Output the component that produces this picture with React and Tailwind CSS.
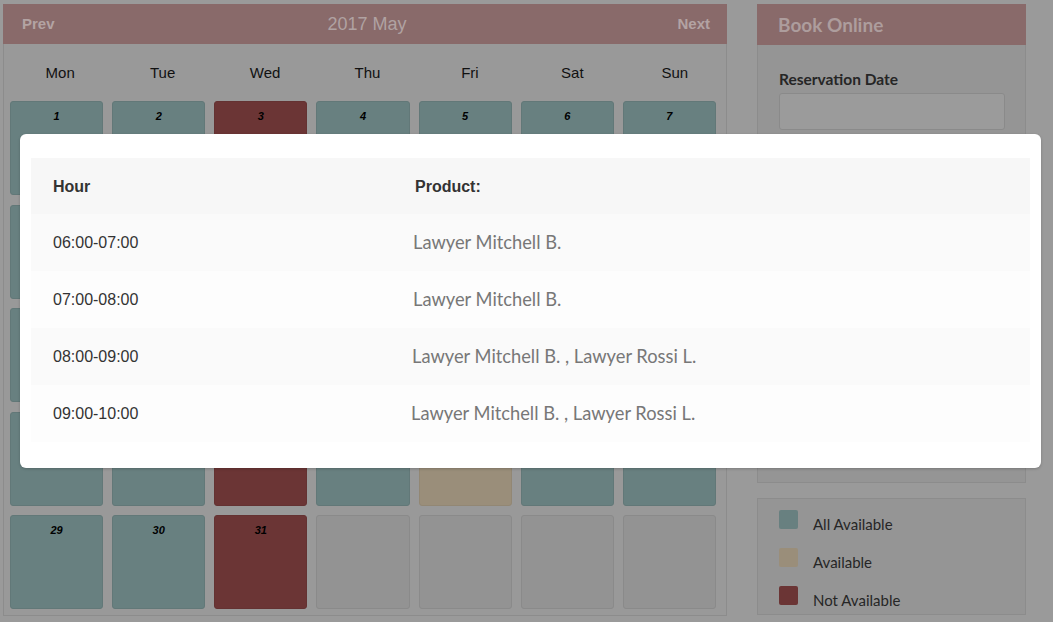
import React from "react";

const T = "teal", R = "red", Y = "tan", E = "empty";
const days = ["Mon", "Tue", "Wed", "Thu", "Fri", "Sat", "Sun"];

const cells = [];
for (let d = 1; d <= 31; d++) {
  const dow = (d - 1) % 7;
  let s = T;
  if (dow === 2) s = R;
  if (d === 26) s = Y;
  cells.push({ d, s });
}
for (let i = 0; i < 4; i++) cells.push({ d: null, s: E });

const cellCls = {
  teal: "bg-[#688080] border-[#627878]",
  red: "bg-[#6b3535] border-[#643232]",
  tan: "bg-[#9a8e7a] border-[#928774]",
  empty: "bg-[#939393] border-[#8a8a8a]",
};

const rows = [
  ["06:00-07:00", "Lawyer Mitchell B.", "bg-[#fafafa]", "pl-[382px]"],
  ["07:00-08:00", "Lawyer Mitchell B.", "bg-[#fdfdfd]", "pl-[382px]"],
  ["08:00-09:00", "Lawyer Mitchell B. , Lawyer Rossi L.", "bg-[#fafafa]", "pl-[381px]"],
  ["09:00-10:00", "Lawyer Mitchell B. , Lawyer Rossi L.", "bg-[#fdfdfd]", "pl-[380px]"],
];

export default function App() {
  return (
    <div className="relative w-[1053px] h-[622px] overflow-hidden bg-[#9a9a9a]" style={{ fontFamily: '"Liberation Sans", Arial, sans-serif' }}>
      <div className="flex pl-[3px] pt-[4px] gap-[30px]">
        {/* Calendar */}
        <div className="w-[724px] flex flex-col">
          <div className="h-[40px] bg-[#896a6a] flex items-center justify-between px-[19px]">
            <span className="text-[15px] font-bold text-[#b3a3a3]">Prev</span>
            <span className="text-[18px] text-[#b0a2a2] ml-[2px]">2017 May</span>
            <span className="text-[15px] font-bold text-[#b3a3a3] mr-[-2px]">Next</span>
          </div>
          <div className="border-x border-b border-[#8c8c8c] h-[572px] bg-[#999999]">
            <div className="grid grid-cols-7 pl-[5px] h-[57px] items-center pt-[2px]">
              {days.map((d) => (
                <div key={d} className="text-center text-[15px] text-[#111]">{d}</div>
              ))}
            </div>
            <div className="grid grid-cols-7 gap-x-[9px] gap-y-[9.5px] pl-[6px] pr-[10px]">
              {cells.map((c, i) => (
                <div key={i} className={`h-[94px] rounded-[3px] border ${cellCls[c.s]} flex justify-center`}>
                  {c.d && <span className="mt-[6px] text-[11px] font-bold italic text-black">{c.d}</span>}
                </div>
              ))}
            </div>
          </div>
        </div>
        {/* Right panel */}
        <div className="w-[269px] flex flex-col" style={{ fontFamily: 'Lato, "Open Sans", sans-serif' }}>
          <div className="h-[41px] bg-[#896a6a] flex items-center pl-[21px] pt-[2px]">
            <span className="text-[19px] font-bold text-[#ad9d9d]">Book Online</span>
          </div>
          <div className="h-[438px] bg-[#959595] border-x border-b border-[#8c8c8c] px-[21px] pt-[24px]">
            <div className="text-[15.5px] font-bold text-[#262626] leading-[20px]">Reservation Date</div>
            <div className="mt-[4px] h-[37px] w-[226px] rounded-[3px] border border-[#8a8a8a] bg-[#9b9b9b]"></div>
          </div>
          <div className="mt-[15px] h-[117px] bg-[#959595] border border-[#8c8c8c] pl-[21px] pt-[11px] flex flex-col gap-[19px]">
            {[
              ["bg-[#688080]", "All Available"],
              ["bg-[#9a8e7a]", "Available"],
              ["bg-[#6b3535]", "Not Available"],
            ].map(([c, t]) => (
              <div key={t} className="flex items-center h-[19px]">
                <div className={`w-[19px] h-[19px] rounded-[2px] ${c}`}></div>
                <span className="ml-[15px] mt-[9px] text-[15px] text-[#262626]">{t}</span>
              </div>
            ))}
          </div>
        </div>
      </div>

      {/* Modal */}
      <div className="absolute left-[20px] top-[134px] w-[1021px] h-[334px] bg-white rounded-[6px] shadow-[0_1px_3px_rgba(0,0,0,0.2)] pt-[24px] px-[11px]">
        <div className="h-[56px] bg-[#f7f7f7] flex items-center pl-[22px] pt-[2px]">
          <span className="w-[362px] text-[16px] font-bold text-[#333]">Hour</span>
          <span className="text-[16px] font-bold text-[#333]">Product:</span>
        </div>
        {rows.map(([h, p, bg, pl], i) => (
          <div key={i} className={`h-[57px] ${bg} flex items-center relative`}>
            <span className="absolute left-[22px] top-[19px] text-[16px] leading-[20px] text-[#333]">{h}</span>
            <span className={`${pl} text-[18.3px] text-[#777]`} style={{ fontFamily: 'Lato, sans-serif' }}>{p}</span>
          </div>
        ))}
      </div>
    </div>
  );
}
